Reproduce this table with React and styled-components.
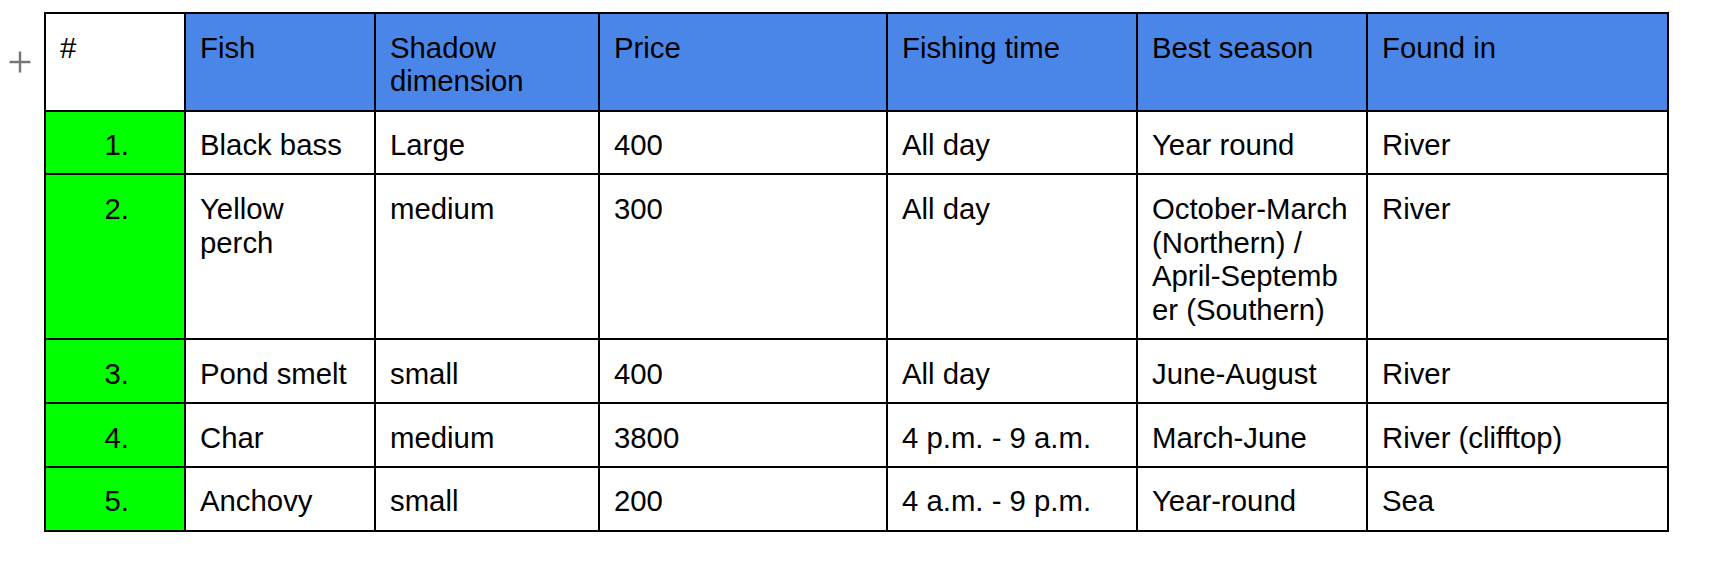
import React from 'react';
import styled, { createGlobalStyle } from 'styled-components';

const GlobalStyle = createGlobalStyle`
    html, body {
        margin: 0;
        padding: 0;
        background: #ffffff;
    }
    body {
        font-family: "Liberation Sans", Arial, sans-serif;
        color: #000000;
    }
`;

const Page = styled.div`
    display: flex;
    align-items: flex-start;
    padding-top: 12px;
`;

const Gutter = styled.div`
    width: 44px;
    flex: none;
    display: flex;
    padding-top: 39px;
    padding-left: 9px;
    box-sizing: border-box;
`;

const AddRow = styled.button`
    width: 22px;
    height: 22px;
    padding: 0;
    border: 0;
    background: none;
    cursor: pointer;
    display: block;

    svg {
        display: block;
    }
`;

const Table = styled.table`
    table-layout: fixed;
    border-collapse: collapse;
    width: 1623px;
    font-size: 29.33px;
    line-height: 1.15;
`;

const HeadCell = styled.th`
    border: 2px solid #000;
    padding: 16.5px 14px 11.6px;
    text-align: left;
    vertical-align: top;
    font-weight: normal;
    background: ${(p) => (p.$plain ? '#ffffff' : '#4a86e8')};
`;

const Cell = styled.td`
    border: 2px solid #000;
    padding: 16.5px 14px 11.6px;
    vertical-align: top;
    text-align: left;
    background: #ffffff;
`;

const NumCell = styled(Cell)`
    background: #00ff00;
    text-align: right;
    padding-right: 55px;
`;

const columns = [
    { label: '#', width: 140, plain: true },
    { label: 'Fish', width: 190 },
    { label: 'Shadow dimension', width: 224 },
    { label: 'Price', width: 288 },
    { label: 'Fishing time', width: 250 },
    { label: 'Best season', width: 230 },
    { label: 'Found in', width: 301 },
];

const rows = [
    ['Black bass', 'Large', '400', 'All day', 'Year round', 'River'],
    [
        'Yellow perch',
        'medium',
        '300',
        'All day',
        <>
            October-March (Northern) / April-Septemb
            <br />
            er (Southern)
        </>,
        'River',
    ],
    ['Pond smelt', 'small', '400', 'All day', 'June-August', 'River'],
    ['Char', 'medium', '3800', '4 p.m. - 9 a.m.', 'March-June', 'River (clifftop)'],
    ['Anchovy', 'small', '200', '4 a.m. - 9 p.m.', 'Year-round', 'Sea'],
];

function PlusIcon() {
    return (
        <svg width="22" height="22" viewBox="0 0 22 22">
            <path d="M11 0.5V21.5M0.5 11H21.5" stroke="#777" strokeWidth="2.4" />
        </svg>
    );
}

export default function App() {
    return (
        <Page>
            <GlobalStyle />
            <Gutter>
                <AddRow title="Add row">
                    <PlusIcon />
                </AddRow>
            </Gutter>
            <Table>
                <colgroup>
                    {columns.map((col) => (
                        <col key={col.label} style={{ width: col.width }} />
                    ))}
                </colgroup>
                <thead>
                    <tr>
                        {columns.map((col) => (
                            <HeadCell key={col.label} $plain={col.plain}>
                                {col.label}
                            </HeadCell>
                        ))}
                    </tr>
                </thead>
                <tbody>
                    {rows.map((row, idx) => (
                        <tr key={idx}>
                            <NumCell>{idx + 1}.</NumCell>
                            {row.map((value, i) => (
                                <Cell key={i}>{value}</Cell>
                            ))}
                        </tr>
                    ))}
                </tbody>
            </Table>
        </Page>
    );
}
